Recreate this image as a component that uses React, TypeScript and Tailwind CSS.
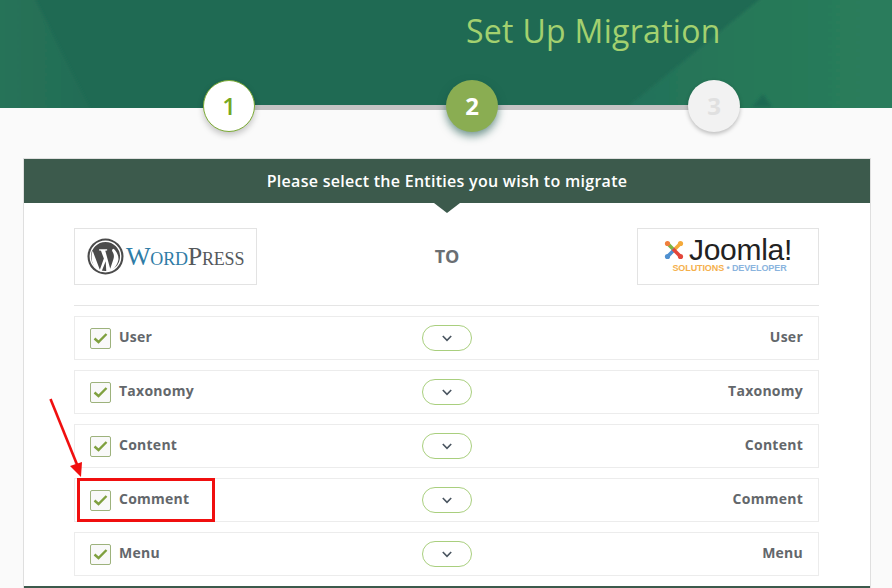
const rows = ["User", "Taxonomy", "Content", "Comment", "Menu"];

function Check() {
  return (
    <span className="flex h-[21px] w-[21px] items-center justify-center rounded-[2px] border border-[#9db27c] bg-[#f9f9f9]">
      <svg width="15" height="12" viewBox="0 0 15 12" fill="none">
        <path d="M1.5 6.5 L5.5 10 L13.5 2" stroke="#7fa03f" strokeWidth="2.4" />
      </svg>
    </span>
  );
}

function Row({ name }: { name: string }) {
  return (
    <div className="flex h-[44px] items-center justify-between border border-[#ececec] px-[15px] text-[14px] font-bold text-[#63676b]">
      <div className="flex w-[200px] items-center gap-[8px]">
        <Check />
        <span className="-mt-[4px] tracking-[0.25px]">{name}</span>
      </div>
      <span className="flex h-[26px] w-[50px] items-center justify-center rounded-[13px] border border-[#a9cf7e] bg-white">
        <svg width="10" height="7" viewBox="0 0 10 7" fill="none">
          <path d="M0.8 1 L5 5.4 L9.2 1" stroke="#4a5560" strokeWidth="1.6" />
        </svg>
      </span>
      <span className="-mt-[4px] w-[200px] text-right tracking-[0.25px]">{name}</span>
    </div>
  );
}

function WordPressLogo() {
  return (
    <div className="flex h-[57px] w-[183px] items-center gap-[2px] border border-[#e3e3e3] bg-white pl-[12px]">
      <svg width="37" height="37" viewBox="0 0 36 36">
        <circle cx="18" cy="18" r="17.5" fill="#4b4b4b" />
        <circle cx="18" cy="18" r="14.8" fill="none" stroke="#fff" strokeWidth="1.3" />
        <path
          d="M5.5 12.5 L12.5 31 L16.4 20 L13.6 12.5 L11.8 12.2 L11.8 11 L19.6 11 L19.6 12.2 L17.8 12.5 L22.6 29.8 L25.6 21 C27 17 25.6 14.6 24.6 13 C24 11.6 24.8 10.4 26 10.4 C28.6 13 31 17 30.6 21 C30 25 27 29.8 24 31.8 L18.8 33 L18.2 22.6 L14 33 C11 32 7.6 29 5.6 25 C4 21 4 16 5.5 12.5 Z"
          fill="#fff"
        />
      </svg>
      <span className="font-['Liberation_Serif',serif] text-[26px] leading-none tracking-[-0.2px] [font-variant:small-caps]">
        <span className="text-[#2f7ca6]">Word</span>
        <span className="text-[#55595c]">Press</span>
      </span>
    </div>
  );
}

function JoomlaLogo() {
  return (
    <div className="flex h-[57px] w-[182px] flex-col items-center justify-center border border-[#e3e3e3] bg-white">
      <div className="flex h-[22px] items-center gap-[5px]">
        <svg width="20" height="20" viewBox="0 0 20 20" fill="none" strokeWidth="3.6">
          <path d="M4 4 L11 11" stroke="#7cb342" />
          <path d="M16 4 L9 11" stroke="#f4a93a" />
          <path d="M4 16 L11 9" stroke="#4f90d0" />
          <path d="M16 16 L9 9" stroke="#e2463a" />
          <circle cx="3.5" cy="3.5" r="2.6" fill="#f07f3c" />
          <circle cx="16.5" cy="3.5" r="2.6" fill="#f4a93a" />
          <circle cx="3.5" cy="16.5" r="2.6" fill="#4f90d0" />
          <circle cx="16.5" cy="16.5" r="2.6" fill="#e2463a" />
        </svg>
        <span className="font-['Liberation_Sans',sans-serif] text-[30px] leading-[22px] tracking-[-0.3px] text-[#222]">
          Joomla!
        </span>
      </div>
      <div className="ml-[3px] mt-[2px] font-['Liberation_Sans',sans-serif] text-[9px] font-bold leading-[11px] tracking-[-0.1px]">
        <span className="text-[#f5b04c]">SOLUTIONS</span>
        <span className="text-[#8ab4de]"> • DEVELOPER</span>
      </div>
    </div>
  );
}

export default function App() {
  return (
    <div className="relative h-[588px] w-[892px] overflow-hidden bg-[#fafafa] font-['Open_Sans',sans-serif]">
      {/* banner */}
      <div className="relative h-[108px] bg-[#1f6a53]">
        <svg className="absolute inset-0" width="892" height="108" viewBox="0 0 892 108">
          <defs>
            <linearGradient id="leftFade" x1="0" y1="0" x2="1" y2="0">
              <stop offset="0" stopColor="#287358" />
              <stop offset="1" stopColor="#216c55" />
            </linearGradient>
            <linearGradient id="rightFade" x1="0" y1="0" x2="1" y2="0">
              <stop offset="0" stopColor="#22705a" />
              <stop offset="0.45" stopColor="#277858" />
              <stop offset="1" stopColor="#297c5b" />
            </linearGradient>
            <filter id="soft">
              <feGaussianBlur stdDeviation="1.5" />
            </filter>
          </defs>
          <polygon points="-5,-5 33,-5 92,113 -5,113" fill="url(#leftFade)" filter="url(#soft)" />
          <polygon points="765,-5 897,-5 897,113 620,113" fill="url(#rightFade)" filter="url(#soft)" />
          <polygon points="752,107 763,94 772,107" fill="#1f6a53" filter="url(#soft)" />
        </svg>
        <h1 className="relative pl-[466px] pt-[9px] text-[32px] font-normal leading-[44px] tracking-[0.3px] text-[#a3d16f]">
          Set Up Migration
        </h1>
      </div>

      {/* steps */}
      <div className="relative z-10 -mt-[28px] flex h-[52px] pl-[203px]">
        <div className="absolute left-[229px] top-[25px] h-[5px] w-[485px] bg-[#c4c4c4]" />
        <div className="relative flex h-[52px] w-[52px] items-center justify-center rounded-full border border-[#7cab35] bg-white text-[24px] font-semibold text-[#77a81f] shadow-[0_3px_6px_rgba(0,0,0,0.22)]">
          1
        </div>
        <div className="relative ml-[191px] flex h-[52px] w-[52px] items-center justify-center rounded-full bg-[#8aad52] text-[24px] font-bold text-white shadow-[0_4px_8px_rgba(20,80,70,0.6)]">
          2
        </div>
        <div className="relative ml-[190px] flex h-[52px] w-[52px] items-center justify-center rounded-full bg-[#f2f2f2] text-[24px] font-bold text-[#e0e0e0] shadow-[0_2px_4px_rgba(0,0,0,0.25)]">
          3
        </div>
      </div>

      {/* card */}
      <div className="ml-[23px] mt-[26px] w-[848px] border border-[#dfdfdf] bg-white">
        <div className="relative flex h-[44px] items-center justify-center bg-[#3c5a4c] text-[16px] font-semibold tracking-[0.28px] text-white">
          Please select the Entities you wish to migrate
          <div className="absolute left-[410px] top-[44px] h-0 w-0 border-x-[13px] border-t-[10px] border-x-transparent border-t-[#3c5a4c]" />
        </div>
        <div className="pl-[50px] pr-[51px] pt-[25px]">
          <div className="flex items-center justify-between border-b border-[#e5e5e5] pb-[20px]">
            <WordPressLogo />
            <span className="text-[18px] font-bold text-[#6a6e72]">TO</span>
            <JoomlaLogo />
          </div>
          <div className="mt-[10px] flex flex-col gap-[10px]">
            {rows.map((r) => (
              <Row key={r} name={r} />
            ))}
          </div>
        </div>
        <div className="mt-[10px] h-[10px] bg-[#3c5a4c]" />
      </div>

      {/* annotation */}
      <div className="absolute left-[77px] top-[478px] h-[44px] w-[138px] border-[3px] border-[#f00f0f]" />
      <svg className="absolute left-[45px] top-[395px]" width="45" height="85" viewBox="0 0 45 85" fill="none">
        <path d="M5.5 4 L33 72" stroke="#f00f0f" strokeWidth="2.6" />
        <polygon points="36,82 25,71 37,67" fill="#f00f0f" />
      </svg>
    </div>
  );
}
